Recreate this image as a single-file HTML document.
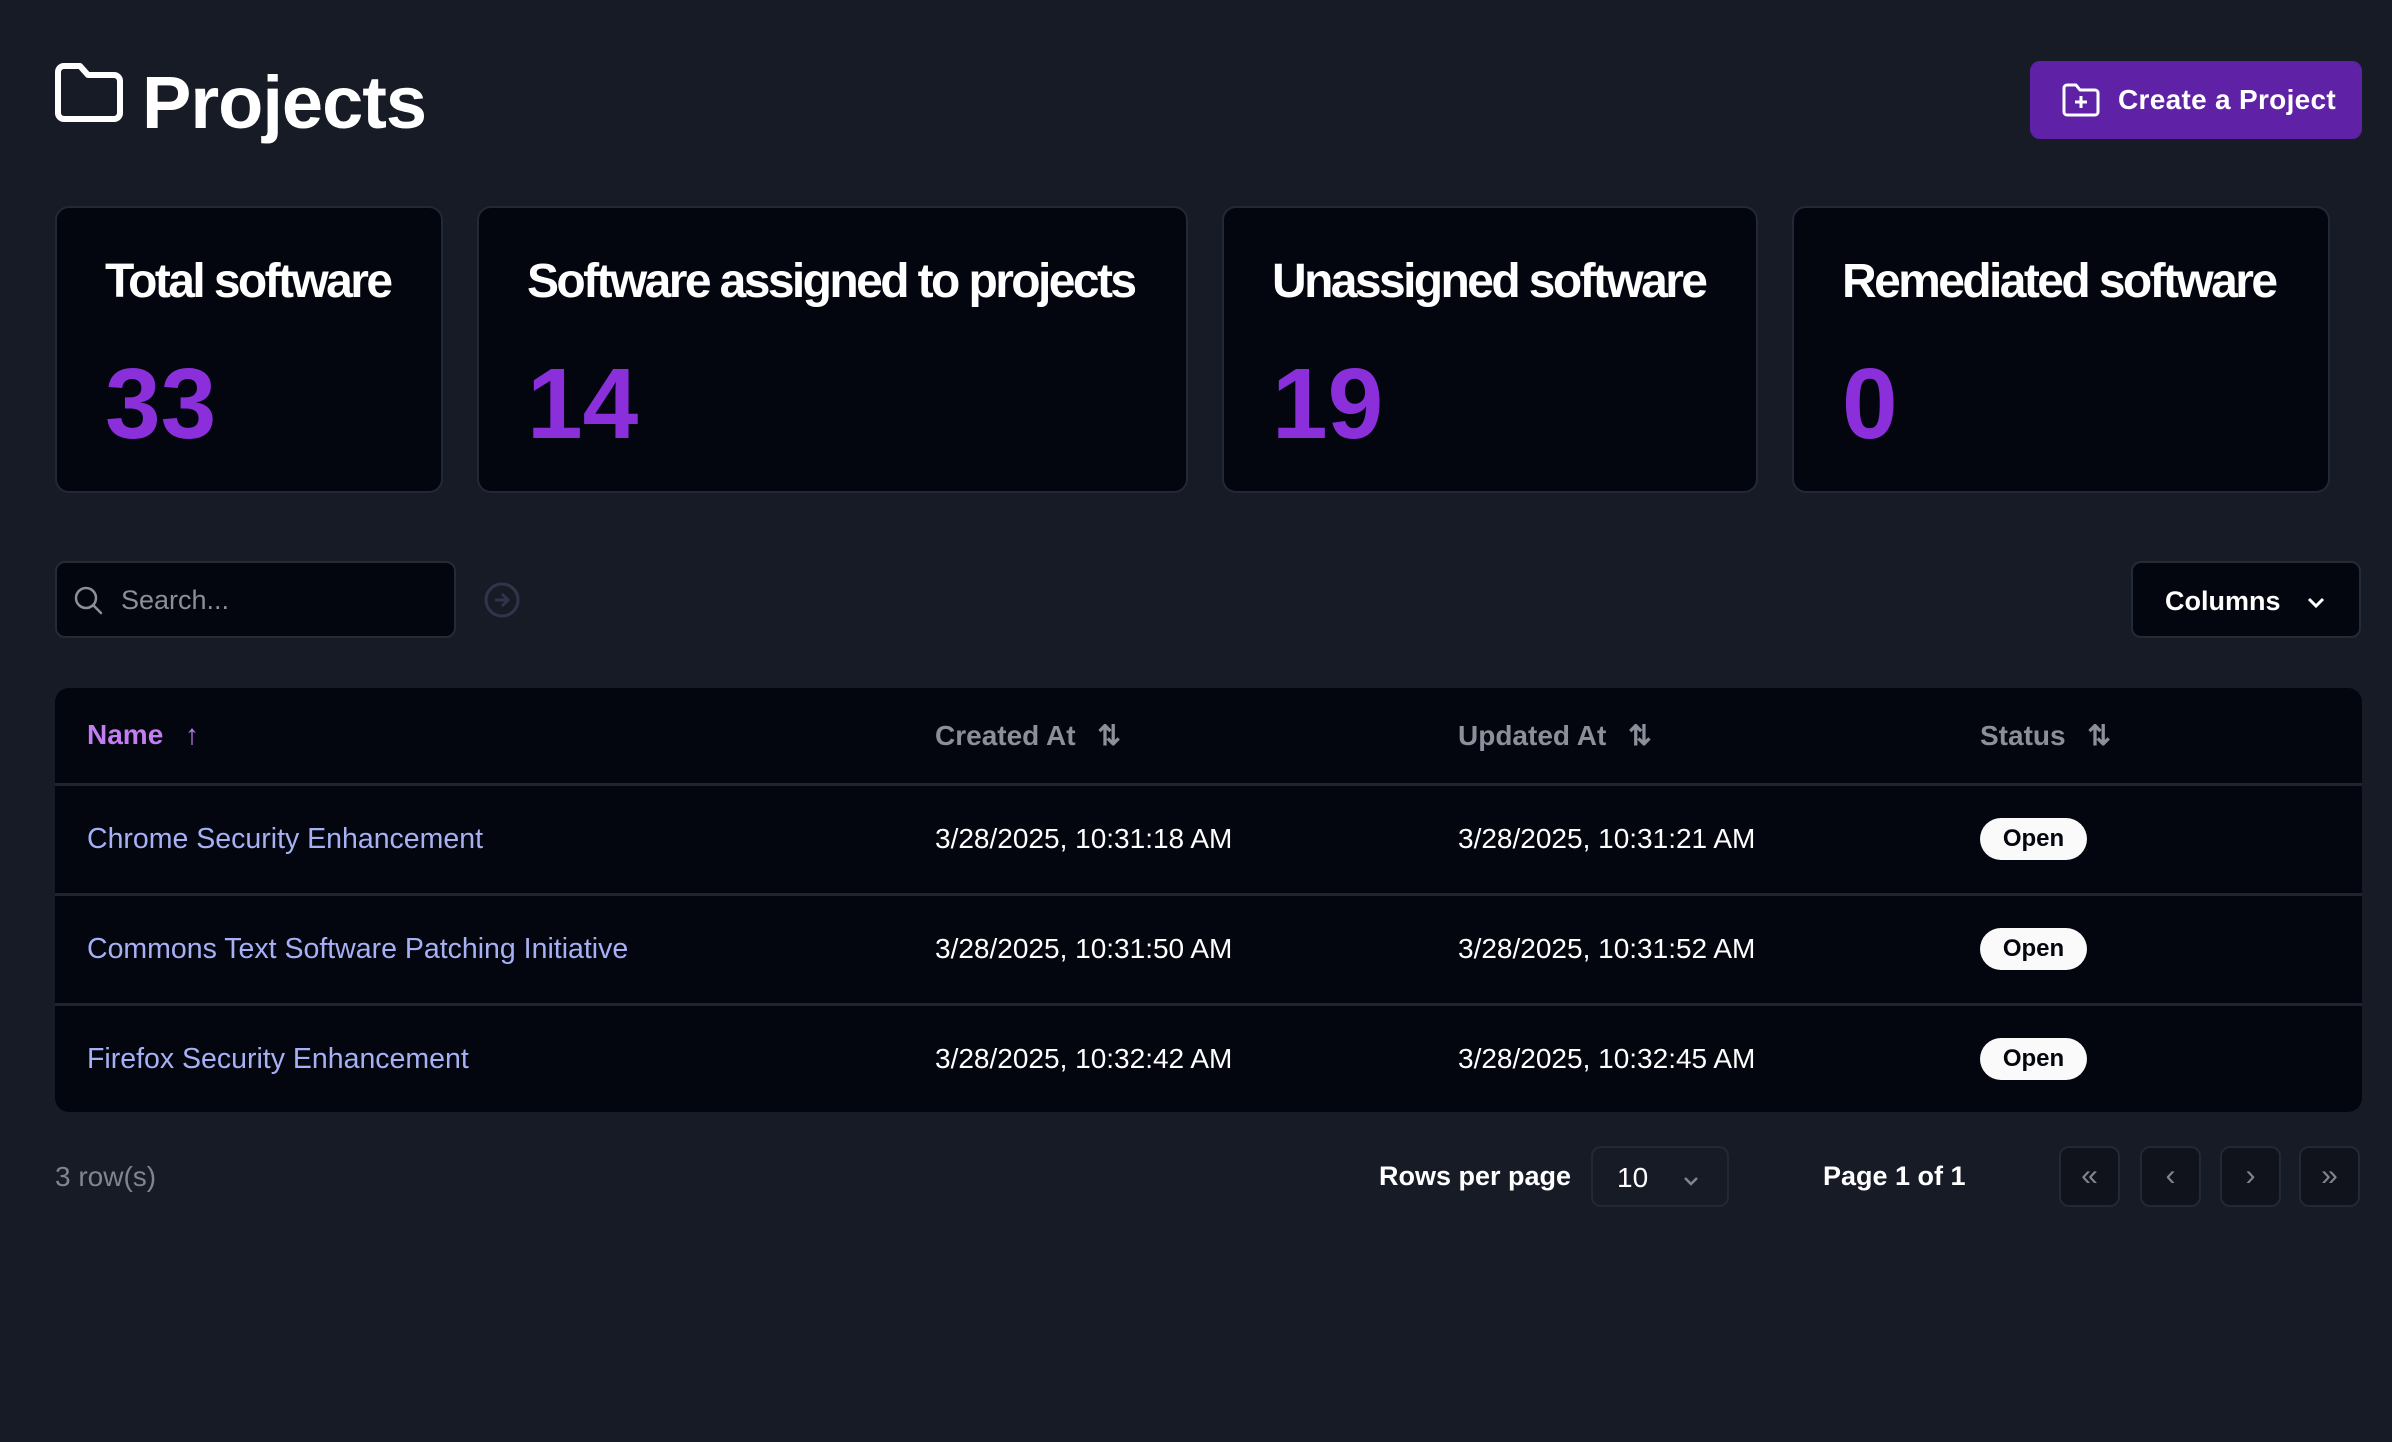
<!DOCTYPE html>
<html><head><meta charset="utf-8"><style>
*{box-sizing:border-box;margin:0;padding:0}
body{width:2392px;height:1442px;background:#171b26;font-family:"Liberation Sans",sans-serif;color:#fff;position:relative;overflow:hidden}
.abs{position:absolute}
.title{left:142px;top:58px;font-size:74px;font-weight:bold;letter-spacing:-1px;line-height:90px}
.btn{left:2030px;top:61px;width:332px;height:78px;background:#5f21a5;border-radius:10px;font-size:28px;font-weight:bold;display:flex;align-items:center;padding-left:32px;letter-spacing:0.3px}
.card{top:206px;height:287px;background:#03050f;border:2px solid #232836;border-radius:14px}
.card .t{position:absolute;left:48px;top:46px;font-size:48px;font-weight:bold;letter-spacing:-2.6px;white-space:nowrap}
.card .n{position:absolute;left:48px;top:136px;font-size:100px;font-weight:bold;color:#8b2fdb;line-height:120px}
.search{left:55px;top:561px;width:401px;height:77px;background:#03050f;border:2px solid #252a37;border-radius:10px}
.search span{position:absolute;left:64px;top:22px;font-size:27px;color:#8b8f99}
.cols{left:2131px;top:561px;width:230px;height:77px;background:#03050f;border:2px solid #252a37;border-radius:10px;font-size:27px;font-weight:bold;padding:23px 0 0 32px}
.table{left:55px;top:688px;width:2307px;height:424px;background:#03050f;border-radius:14px}
.line{position:absolute;left:0;width:100%;height:3px;background:#1f2430}
.cell{position:absolute;font-size:28px;white-space:nowrap}
.h{top:31px;color:#8a8f99;font-weight:bold}
.nm{color:#a6b1f5;font-size:28.5px}
.pill{position:absolute;left:1925px;width:107px;height:42px;background:#fafafa;border-radius:21px;color:#03050f;font-weight:bold;font-size:24px;text-align:center;line-height:42px}
.pg{top:1146px;width:61px;height:61px;background:#10131c;border:2px solid #232836;border-radius:10px;color:#80858f;font-size:30px;text-align:center;line-height:56px}
</style></head><body>
<svg class="abs" style="left:54px;top:62px" width="72" height="64" viewBox="0 0 72 64"><path d="M10 4h16l8 9h26a6 6 0 0 1 6 6v32a6 6 0 0 1-6 6H10a6 6 0 0 1-6-6V10a6 6 0 0 1 6-6z" fill="none" stroke="#fff" stroke-width="6" stroke-linejoin="round"/></svg>
<div class="abs title">Projects</div>
<div class="abs btn"><svg width="38" height="34" viewBox="0 0 38 34" style="margin-right:18px"><path d="M5 2h9l4 5h15a3 3 0 0 1 3 3v19a3 3 0 0 1-3 3H5a3 3 0 0 1-3-3V5a3 3 0 0 1 3-3z M19 13v12 M13 19h12" fill="none" stroke="#fff" stroke-width="3" stroke-linejoin="round"/></svg>Create a Project</div>

<div class="abs card" style="left:55px;width:388px"><div class="t">Total software</div><div class="n">33</div></div>
<div class="abs card" style="left:477px;width:711px"><div class="t">Software assigned to projects</div><div class="n">14</div></div>
<div class="abs card" style="left:1222px;width:536px"><div class="t">Unassigned software</div><div class="n">19</div></div>
<div class="abs card" style="left:1792px;width:538px"><div class="t">Remediated software</div><div class="n">0</div></div>

<div class="abs search"><svg style="position:absolute;left:16px;top:22px" width="32" height="32" viewBox="0 0 32 32"><circle cx="13" cy="13" r="10" fill="none" stroke="#8b8f99" stroke-width="2.5"/><path d="M21 21l7 7" stroke="#8b8f99" stroke-width="2.5" stroke-linecap="round"/></svg><span>Search...</span></div>
<svg class="abs" style="left:483px;top:581px" width="38" height="38" viewBox="0 0 38 38"><circle cx="19" cy="19" r="16" fill="none" stroke="#30354a" stroke-width="3"/><path d="M12 19h13M19 13l6 6-6 6" fill="none" stroke="#30354a" stroke-width="3"/></svg>
<div class="abs cols">Columns <svg style="margin-left:18px" width="20" height="14" viewBox="0 0 20 14"><path d="M3 3l7 7 7-7" fill="none" stroke="#fff" stroke-width="3"/></svg></div>

<div class="abs table">
<div class="cell h" style="left:32px;color:#c27ef0">Name <span style="margin-left:14px">↑</span></div>
<div class="cell h" style="left:880px">Created At <span style="margin-left:14px">⇅</span></div>
<div class="cell h" style="left:1403px">Updated At <span style="margin-left:14px">⇅</span></div>
<div class="cell h" style="left:1925px">Status <span style="margin-left:14px">⇅</span></div>
<div class="line" style="top:95px"></div>
<div class="cell nm" style="left:32px;top:135px">Chrome Security Enhancement</div>
<div class="cell" style="left:880px;top:135px">3/28/2025, 10:31:18 AM</div>
<div class="cell" style="left:1403px;top:135px">3/28/2025, 10:31:21 AM</div>
<div class="pill" style="top:130px">Open</div>
<div class="line" style="top:205px"></div>
<div class="cell nm" style="left:32px;top:245px">Commons Text Software Patching Initiative</div>
<div class="cell" style="left:880px;top:245px">3/28/2025, 10:31:50 AM</div>
<div class="cell" style="left:1403px;top:245px">3/28/2025, 10:31:52 AM</div>
<div class="pill" style="top:240px">Open</div>
<div class="line" style="top:315px"></div>
<div class="cell nm" style="left:32px;top:355px">Firefox Security Enhancement</div>
<div class="cell" style="left:880px;top:355px">3/28/2025, 10:32:42 AM</div>
<div class="cell" style="left:1403px;top:355px">3/28/2025, 10:32:45 AM</div>
<div class="pill" style="top:350px">Open</div>
</div>

<div class="abs" style="left:55px;top:1161px;font-size:28px;color:#80858f">3 row(s)</div>
<div class="abs" style="left:1379px;top:1161px;font-size:27px;font-weight:bold">Rows per page</div>
<div class="abs" style="left:1591px;top:1146px;width:138px;height:61px;border:2px solid #232836;border-radius:10px;font-size:28px;padding:14px 0 0 24px">10 <svg style="margin-left:26px" width="18" height="12" viewBox="0 0 18 12"><path d="M3 3l6 6 6-6" fill="none" stroke="#80858f" stroke-width="2.5"/></svg></div>
<div class="abs" style="left:1823px;top:1161px;font-size:27px;font-weight:bold">Page 1 of 1</div>
<div class="abs pg" style="left:2059px">«</div>
<div class="abs pg" style="left:2140px">‹</div>
<div class="abs pg" style="left:2220px">›</div>
<div class="abs pg" style="left:2299px">»</div>
</body></html>
